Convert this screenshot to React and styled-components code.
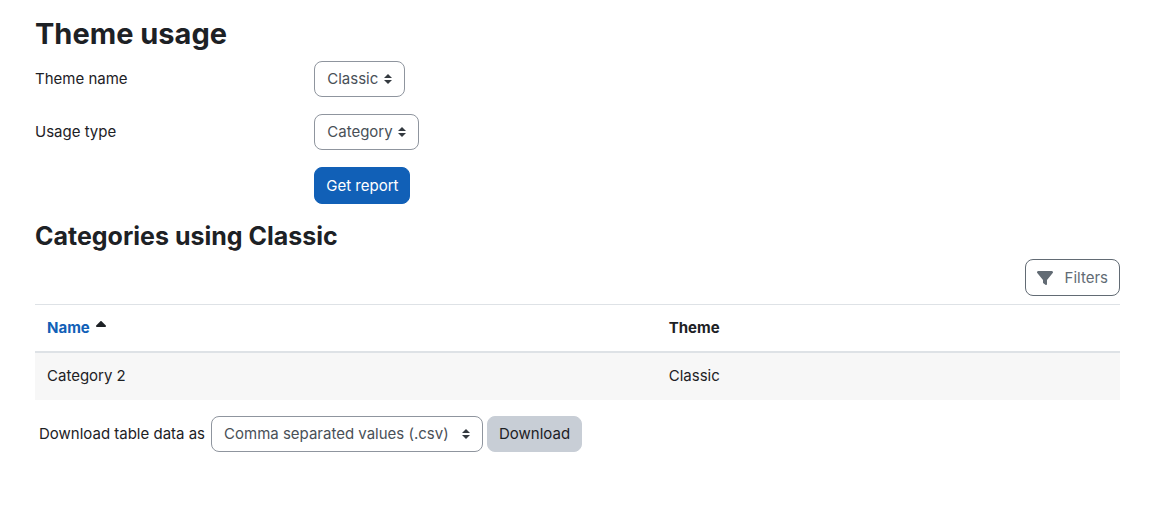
import React from "react";
import styled, { createGlobalStyle } from "styled-components";
import { FaFilter } from "react-icons/fa6";

const formats = [
  "Comma separated values (.csv)",
  "Microsoft Excel (.xlsx)",
  "HTML table",
  "Javascript Object Notation (.json)",
  "OpenDocument (.ods)",
];

const rows = [{ name: "Category 2", theme: "Classic" }];

const App = () => {
  return (
    <>
      <GlobalStyle />
      <Page>
        <Title>Theme usage</Title>
        <form onSubmit={(e) => e.preventDefault()}>
          <FormRow>
            <label htmlFor="theme-name">Theme name</label>
            <Select id="theme-name">
              <option>Classic</option>
            </Select>
          </FormRow>
          <FormRow>
            <label htmlFor="usage-type">Usage type</label>
            <Select id="usage-type">
              <option>Category</option>
            </Select>
          </FormRow>
          <FormRow>
            <span />
            <Button $variant="primary">Get report</Button>
          </FormRow>
        </form>

        <Subtitle>Categories using Classic</Subtitle>
        <Toolbar>
          <Button type="button" $variant="outline">
            <FaFilter size={16} />
            Filters
          </Button>
        </Toolbar>
        <Table>
          <thead>
            <tr>
              <th className="name">
                <a href="#name">Name</a>
                <SortIcon viewBox="0 0 10 6" aria-hidden="true">
                  <path d="M4.4.3a.9.9 0 0 1 1.2 0L9.8 4.6c.4.5.2 1.4-.7 1.4H.9C0 6-.2 5.1.2 4.6z" />
                </SortIcon>
              </th>
              <th>Theme</th>
            </tr>
          </thead>
          <tbody>
            {rows.map((row) => (
              <tr key={row.name}>
                <td>{row.name}</td>
                <td>{row.theme}</td>
              </tr>
            ))}
          </tbody>
        </Table>

        <Download onSubmit={(e) => e.preventDefault()}>
          <label htmlFor="format">Download table data as</label>
          <Select id="format" $width="272px">
            {formats.map((format) => (
              <option key={format}>{format}</option>
            ))}
          </Select>
          <Button $variant="secondary">Download</Button>
        </Download>
      </Page>
    </>
  );
};

const GlobalStyle = createGlobalStyle`
  * {
    box-sizing: border-box;
  }
  body {
    margin: 0;
    background: #fff;
    color: #1d2125;
    font-family: Inter, "Liberation Sans", sans-serif;
    font-size: 15px;
    line-height: 22px;
  }
`;

const variants = {
  primary: { color: "#fff", background: "#1160b7", border: "#1160b7" },
  secondary: { color: "#1d2125", background: "#c8ced6", border: "#c8ced6" },
  outline: { color: "#626b74", background: "#fff", border: "#626b74" },
};

const Page = styled.main`
  padding: 16px 45px 24px 35px;
`;

const Title = styled.h2`
  margin: 0 0 9px;
  font-size: 29px;
  line-height: 36px;
  font-weight: 700;
`;

const Subtitle = styled.h3`
  margin: 0 0 8px;
  font-size: 25px;
  line-height: 30px;
  font-weight: 700;
`;

const FormRow = styled.div`
  display: flex;
  align-items: center;
  margin-bottom: 17px;

  > :first-child {
    flex: 0 0 calc(25% + 8px);
  }
`;

const Select = styled.select`
  appearance: none;
  width: ${({ $width }) => $width || "auto"};
  height: 36px;
  padding: 0 25px 0 12px;
  border: 1px solid #8f959e;
  border-radius: 8px;
  background: #fff
    url("data:image/svg+xml,%3csvg xmlns='http://www.w3.org/2000/svg' width='4' height='5' viewBox='0 0 4 5'%3e%3cpath fill='%23343a40' d='M2 0L0 2h4zm0 5L0 3h4z'/%3e%3c/svg%3e")
    no-repeat right 12px center / 8px 10px;
  color: #495057;
  font: inherit;
`;

const Button = styled.button`
  display: inline-flex;
  align-items: center;
  gap: 12px;
  height: ${({ $variant }) => ($variant === "secondary" ? "36px" : "37px")};
  padding: 0 11px;
  border: 1px solid ${({ $variant }) => variants[$variant].border};
  border-radius: 8px;
  background: ${({ $variant }) => variants[$variant].background};
  color: ${({ $variant }) => variants[$variant].color};
  font: inherit;
  cursor: pointer;
`;

const Toolbar = styled.div`
  display: flex;
  justify-content: flex-end;
  margin-bottom: 8px;
`;

const Table = styled.table`
  width: 100%;
  margin-bottom: 16px;
  border-collapse: collapse;

  th,
  td {
    height: 48px;
    padding: 0 12px;
    border-top: 1px solid #dee2e6;
    text-align: left;
  }
  th {
    height: 47px;
    border-bottom: 2px solid #dee2e6;
    font-weight: 700;
  }
  .name {
    width: 57.3%;
  }
  tbody tr {
    background: #f7f7f7;
  }
  a {
    color: #1160b7;
    text-decoration: none;
  }
`;

const SortIcon = styled.svg`
  width: 10px;
  height: 6px;
  margin-left: 6px;
  vertical-align: 6px;
  fill: #1d2125;
`;

const Download = styled.form`
  display: flex;
  align-items: center;
  gap: 4px;
  padding-left: 4px;

  label {
    margin-right: 2px;
  }
`;

export default App;
